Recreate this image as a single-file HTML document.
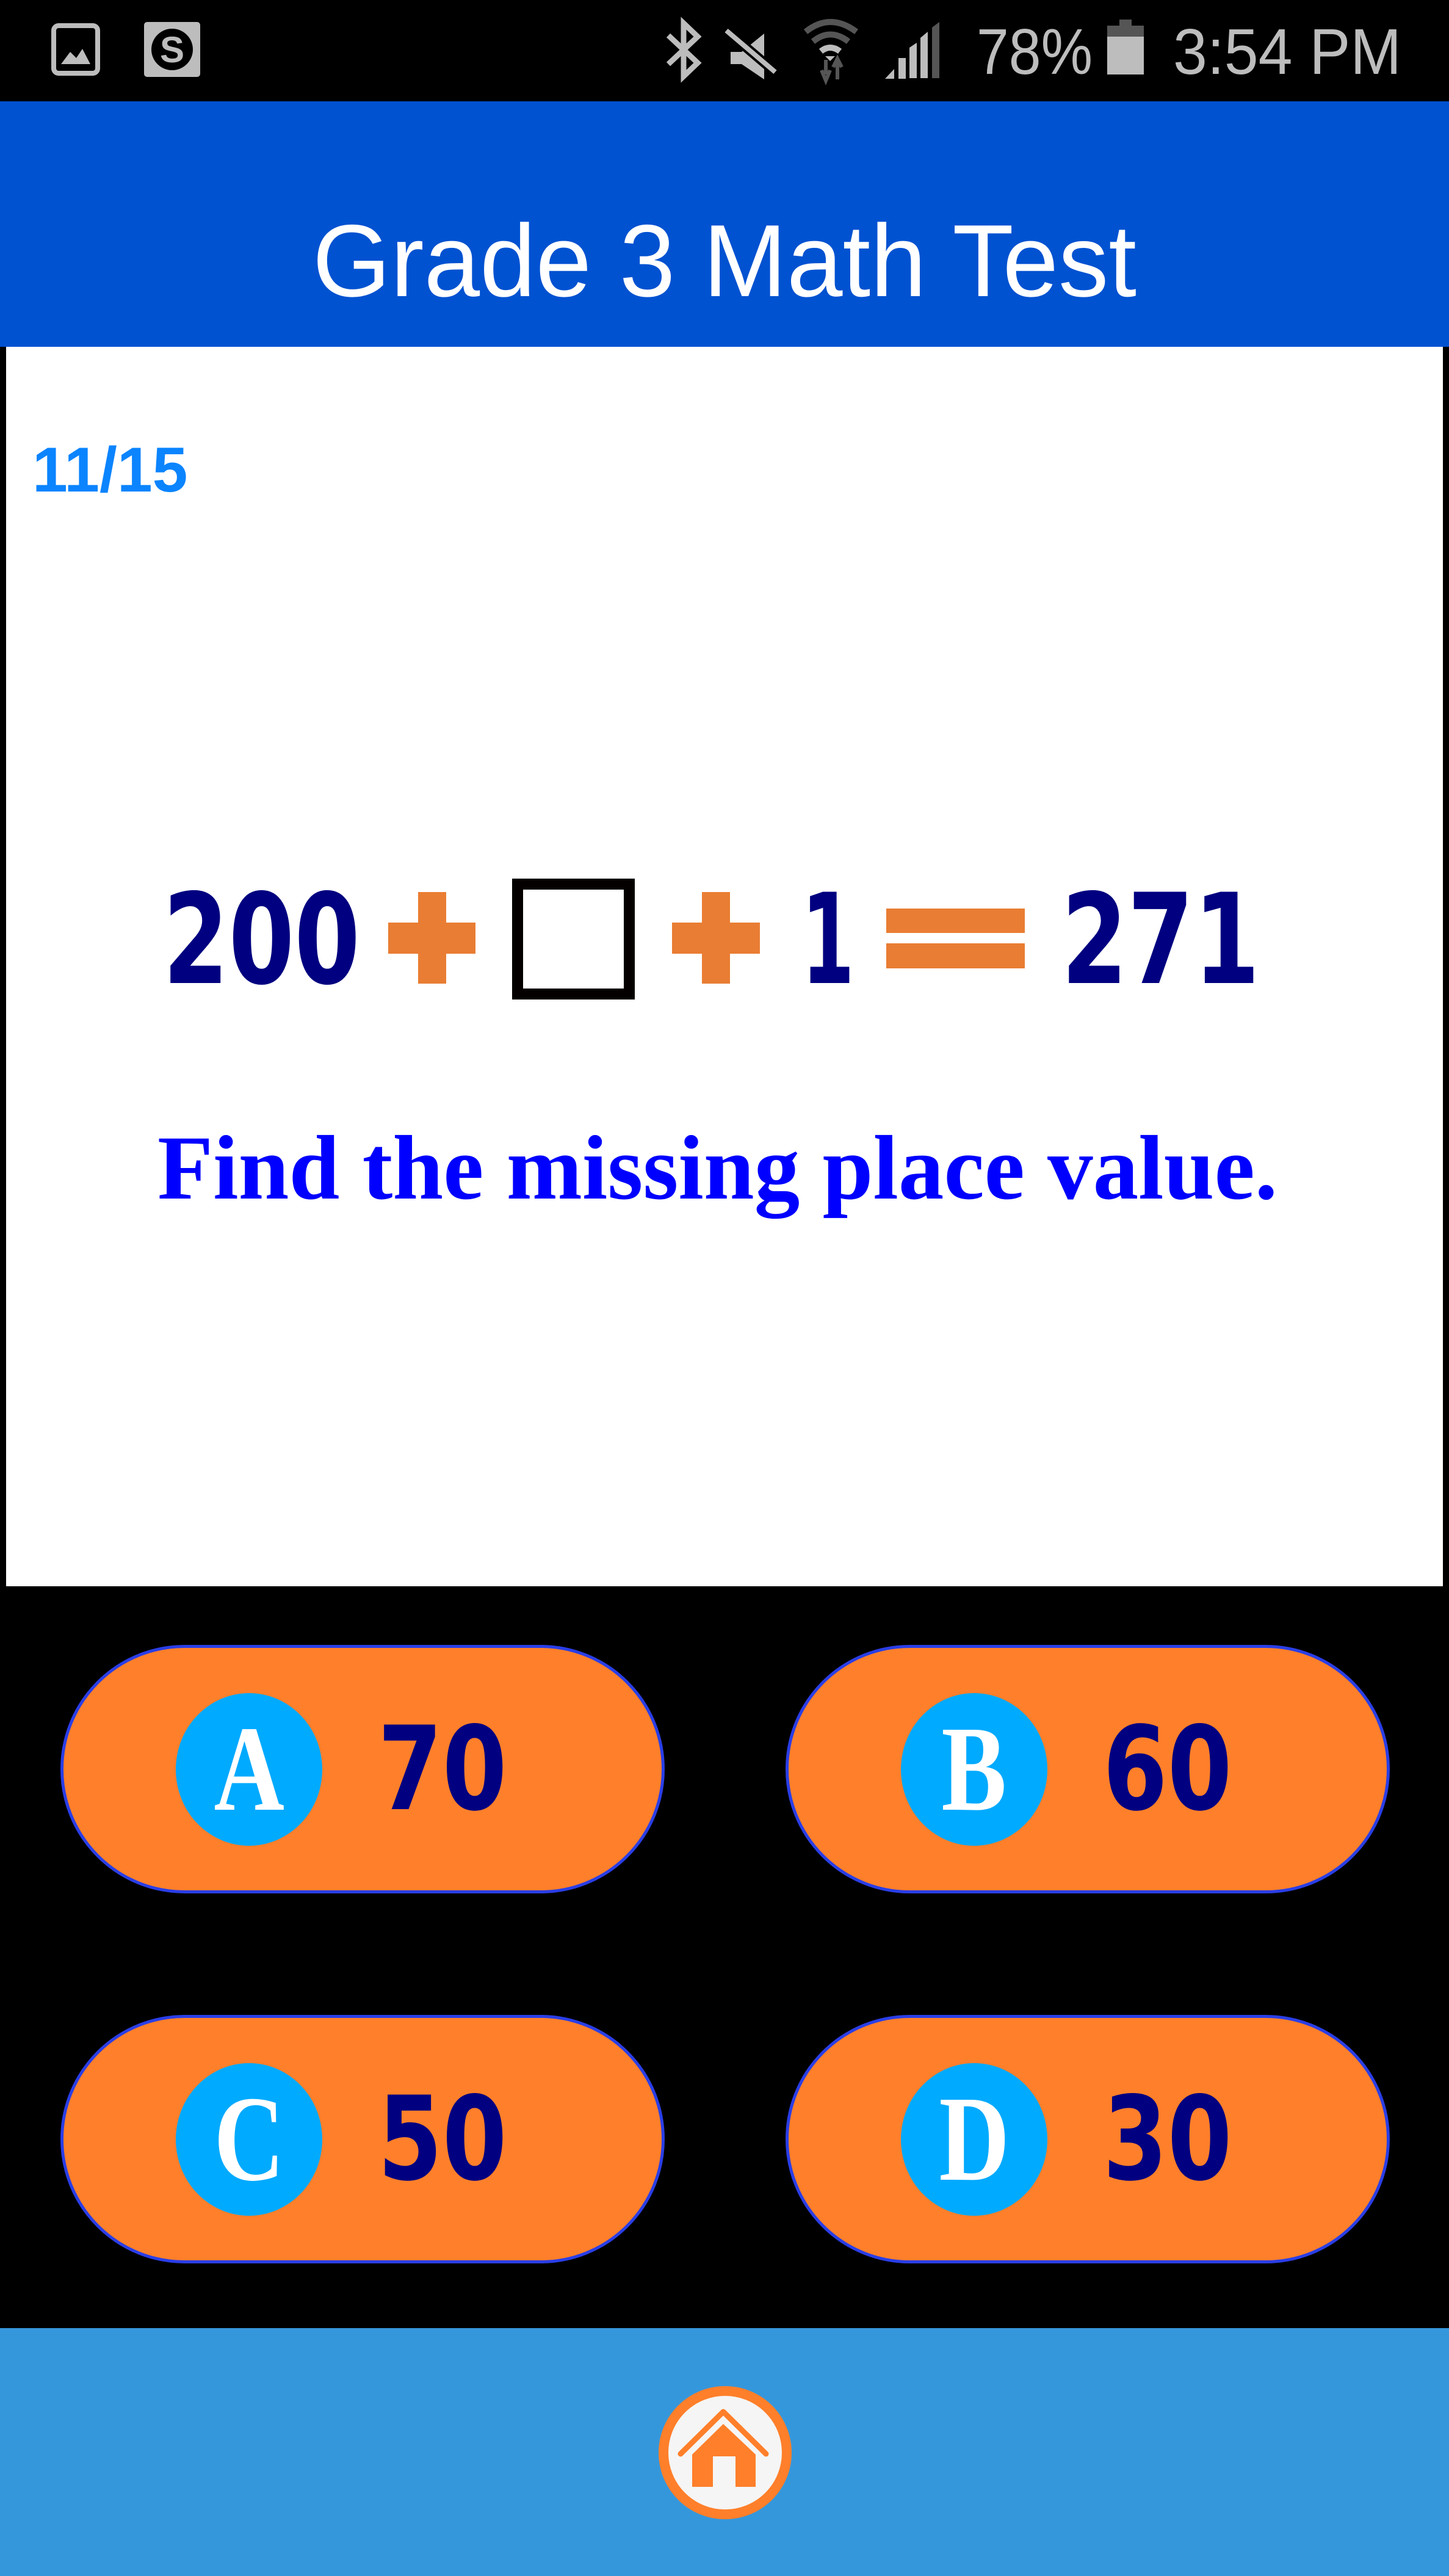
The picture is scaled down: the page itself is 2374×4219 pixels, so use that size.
<!DOCTYPE html>
<html><head><meta charset="utf-8"><style>
*{margin:0;padding:0;box-sizing:border-box}
body{width:2374px;height:4219px;position:relative;background:#000;overflow:hidden;font-family:"Liberation Sans",sans-serif}
.a{position:absolute}
.pill{position:absolute;width:990px;height:407px;border-radius:204px;background:#ff7f2a;border:5px solid #2a3ee6}
.circ{position:absolute;left:184px;top:74px;width:240px;height:250px;border-radius:50%;background:#00aaff;color:#fff;font-family:"Liberation Serif",serif;font-weight:bold;font-size:200px;line-height:250px;text-align:center}
.circ span{display:inline-block;transform:scaleX(0.8)}
.num{position:absolute;left:515px;top:0;height:397px;line-height:397px;color:#000080;font-family:"DejaVu Sans","Liberation Sans",sans-serif;font-weight:bold;font-size:190px;transform:scaleX(0.8);transform-origin:left center}
</style></head><body>
<svg class="a" style="left:0;top:0" width="2374" height="166">
<rect width="2374" height="166" fill="#000"/>
<rect x="88" y="42" width="72" height="78" rx="8" fill="none" stroke="#bdbdbd" stroke-width="8"/>
<path d="M100 105 L115 85 L125 95 L135 80 L148 105 Z" fill="#bdbdbd"/>
<rect x="236" y="36" width="92" height="90" rx="5" fill="#bdbdbd"/>
<circle cx="282" cy="81" r="34" fill="#000"/>
<text x="282" y="102" font-size="60" font-weight="bold" fill="#bdbdbd" text-anchor="middle" font-family="Liberation Sans">S</text>
<path d="M1095 58 L1143 103 L1120 125 L1120 38 L1143 60 L1095 105" fill="none" stroke="#bdbdbd" stroke-width="9"/>
<path d="M1197 85 L1215 85 L1252 55 L1252 130 L1215 105 L1197 105Z" fill="#bdbdbd"/>
<path d="M1190 50 L1270 118" stroke="#000" stroke-width="16"/>
<path d="M1190 50 L1270 118" stroke="#bdbdbd" stroke-width="8"/>
<path d="M1320 52 Q1360 20 1403 52" fill="none" stroke="#555" stroke-width="10"/>
<path d="M1332 68 Q1360 45 1390 68" fill="none" stroke="#555" stroke-width="10"/>
<path d="M1345 84 Q1360 72 1376 84" fill="none" stroke="#bdbdbd" stroke-width="10"/>
<path d="M1352 92 L1368 92 L1360 100Z" fill="#bdbdbd"/>
<path d="M1353 98 L1353 122 M1346 115 L1353 132 L1360 115" stroke="#555" stroke-width="6" fill="none"/>
<path d="M1372 130 L1372 100 M1365 110 L1372 96 L1379 110" stroke="#555" stroke-width="6" fill="none"/>
<path d="M1450 129 L1465 113 L1465 129Z" fill="#bdbdbd"/>
<rect x="1472" y="95" width="12" height="34" fill="#bdbdbd"/>
<path d="M1490 128 L1490 78 L1502 70 L1502 128Z" fill="#bdbdbd"/>
<path d="M1508 128 L1508 62 L1520 52 L1520 128Z" fill="#bdbdbd"/>
<path d="M1527 128 L1527 45 L1539 36 L1539 128Z" fill="#555"/>
<text x="1600" y="121" font-size="106" fill="#bdbdbd" font-family="Liberation Sans" textLength="190" lengthAdjust="spacingAndGlyphs">78%</text>
<rect x="1814" y="42" width="60" height="80" fill="#bdbdbd"/>
<rect x="1814" y="42" width="60" height="18" fill="#555"/>
<rect x="1834" y="32" width="20" height="12" fill="#555"/>
<text x="1922" y="121" font-size="106" fill="#bdbdbd" font-family="Liberation Sans" textLength="374" lengthAdjust="spacingAndGlyphs">3:54 PM</text>
</svg>
<div class="a" style="left:0;top:166px;width:2374px;height:402px;background:#0052d1"></div>
<svg class="a" style="left:0;top:166px" width="2374" height="402"><text x="1187" y="319" text-anchor="middle" font-size="168" fill="#fff" font-family="Liberation Sans" textLength="1350" lengthAdjust="spacingAndGlyphs">Grade 3 Math Test</text></svg>
<div class="a" style="left:10px;top:568px;width:2354px;height:2030px;background:#fff"></div>
<div class="a" style="left:53px;top:718px;font-size:104px;font-weight:bold;color:#0a84ff;line-height:104px">11/15</div>
<svg class="a" style="left:0;top:1400px" width="2374" height="620">
<g font-family="DejaVu Sans,Liberation Sans" font-weight="bold" fill="#000080" font-size="205">
<text x="267" y="210" textLength="323" lengthAdjust="spacingAndGlyphs">200</text>
<text x="1313" y="210" textLength="87" lengthAdjust="spacingAndGlyphs">1</text>
<text x="1739" y="210" textLength="325" lengthAdjust="spacingAndGlyphs">271</text>
</g>
<g fill="#e97d33">
<rect x="685" y="61" width="46" height="150"/><rect x="636" y="111" width="143" height="51"/>
<rect x="1150" y="61" width="46" height="150"/><rect x="1101" y="111" width="144" height="51"/>
<rect x="1452" y="88" width="227" height="40"/><rect x="1452" y="145" width="227" height="41"/>
</g>
<rect x="848" y="48" width="183" height="180" fill="none" stroke="#050000" stroke-width="18"/>
<text x="258" y="563" font-family="Liberation Serif,DejaVu Serif,serif" font-weight="bold" font-size="150" fill="#0000ff" textLength="1835" lengthAdjust="spacingAndGlyphs">Find the missing place value.</text>
</svg>
<div class="pill" style="left:99px;top:2694px"><div class="circ"><span>A</span></div><div class="num">70</div></div>
<div class="pill" style="left:1287px;top:2694px"><div class="circ"><span>B</span></div><div class="num">60</div></div>
<div class="pill" style="left:99px;top:3300px"><div class="circ"><span>C</span></div><div class="num">50</div></div>
<div class="pill" style="left:1287px;top:3300px"><div class="circ"><span>D</span></div><div class="num">30</div></div>
<div class="a" style="left:0;top:3813px;width:2374px;height:406px;background:#3597db"></div>
<svg class="a" style="left:1050px;top:3880px" width="280" height="280">
<circle cx="138" cy="137" r="101" fill="#f5f5f5" stroke="#ff7f2a" stroke-width="16"/>
<path d="M65 139 L135 70 L205 139" fill="none" stroke="#ff7f2a" stroke-width="9" stroke-linecap="round" stroke-linejoin="round"/>
<path d="M84 140 L135 90 L188 140 L188 193 L155 193 L155 143 L118 143 L118 193 L84 193Z" fill="#ff7f2a"/>
</svg>
</body></html>
